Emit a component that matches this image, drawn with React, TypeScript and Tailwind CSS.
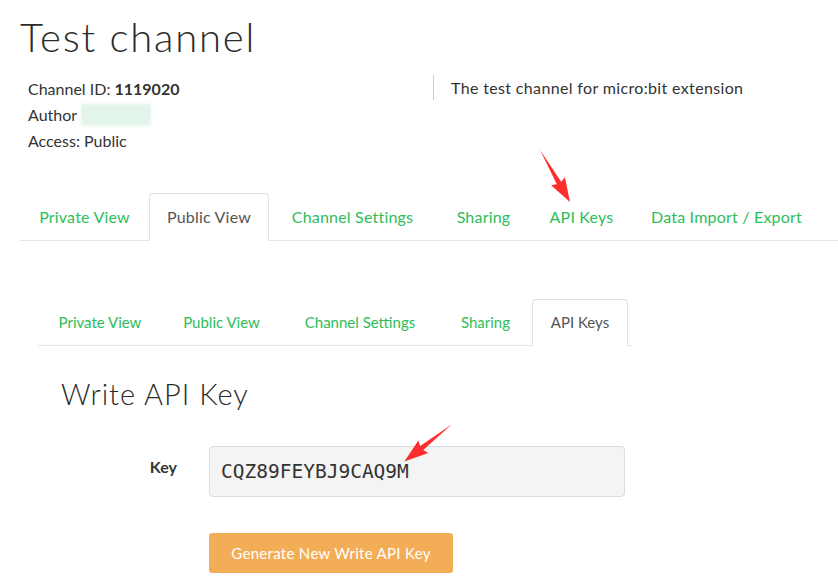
import { FC } from "react";

const sans = "font-['Lato','Liberation_Sans',sans-serif]";
const thin = "font-['Lato','Liberation_Sans',sans-serif] font-light";

const topTabs = [
  { label: "Private View", w: "w-[129px]" },
  { label: "Public View", w: "w-[120px]", active: true },
  { label: "Channel Settings", w: "w-[167px]" },
  { label: "Sharing", w: "w-[95px]" },
  { label: "API Keys", w: "w-[101px]" },
  { label: "Data Import / Export", w: "w-[189px]" },
];

const subTabs = [
  { label: "Private View", w: "w-[124px]" },
  { label: "Public View", w: "w-[119px]" },
  { label: "Channel Settings", w: "w-[158px]" },
  { label: "Sharing", w: "w-[93px]" },
  { label: "API Keys", w: "w-[96px]", active: true },
];

const Arrow: FC<{ className: string; rotate: number }> = ({ className, rotate }) => (
  <svg className={className} width="60" height="20" viewBox="0 0 60 20" style={{ transform: `rotate(${rotate}deg)` }}>
    <polygon points="0,10 38,7.5 36,2 60,10 36,18 38,12.5" fill="#ff2e2e" />
  </svg>
);

const App: FC = () => {
  return (
    <div className={`relative w-[838px] h-[584px] overflow-hidden bg-white pl-[20px] ${sans}`}>
      <h1 className={`${thin} text-[40px] leading-[44px] tracking-[1.8px] text-[#2b2b2b] pt-[15px]`}>Test channel</h1>

      <div className="flex mt-[17px] text-[16px] text-[#333]">
        <div className="w-[413px] pl-[8px] leading-[26px]">
          <p>
            Channel ID: <b className="font-bold">1119020</b>
          </p>
          <p className="flex items-center">
            Author
            <span className="ml-[4px] inline-block w-[70px] h-[22px] bg-[#e3f4ea] blur-[1px]" />
          </p>
          <p>Access: Public</p>
        </div>
        <div className="border-l border-[#ccc] h-[25px] pl-[17px] leading-[26px] tracking-[0.35px] -translate-y-[1px]">
          The test channel for micro:bit extension
        </div>
      </div>

      <ul className="flex mt-[39px] border-b border-[#e5e5e5] text-[16px] tracking-[0.2px]">
        {topTabs.map((t) => (
          <li
            key={t.label}
            className={`${t.w} h-[48px] flex items-center justify-center -mb-px ${
              t.active
                ? "border border-[#e1e1e1] border-b-white rounded-t-[4px] text-[#555] bg-white"
                : "text-[#2ebd59]"
            }`}
          >
            {t.label}
          </li>
        ))}
      </ul>

      <ul className="flex ml-[18px] w-[594px] mt-[58px] border-b border-[#e5e5e5] text-[15px]">
        {subTabs.map((t) => (
          <li
            key={t.label}
            className={`${t.w} h-[47px] flex items-center justify-center -mb-px ${
              t.active
                ? "border border-[#e1e1e1] border-b-white rounded-t-[4px] text-[#555] bg-white"
                : "text-[#2ebd59]"
            }`}
          >
            {t.label}
          </li>
        ))}
      </ul>

      <h2 className={`${thin} ml-[41px] mt-[30px] text-[29px] leading-[36px] tracking-[1px] text-[#2b2b2b]`}>Write API Key</h2>

      <div className="flex items-center mt-[34px]">
        <div className="w-[189px] pr-[32px] text-right text-[16px] font-bold text-[#333] -translate-y-[5px]">Key</div>
        <div className="w-[416px] h-[51px] flex items-center px-[11px] bg-[#f4f4f4] border border-[#dcdcdc] rounded-[4px] font-['DejaVu_Sans_Mono',monospace] text-[19.5px] text-[#333]">
          CQZ89FEYBJ9CAQ9M
        </div>
      </div>

      <button className={`mt-[36px] ml-[189px] w-[244px] h-[40px] rounded-[3px] bg-[#f4ad57] text-white text-[15px] tracking-[0.3px] ${sans}`}>
        Generate New Write API Key
      </button>

      <Arrow className="absolute left-[525px] top-[166px] origin-center" rotate={60} />
      <Arrow className="absolute left-[398px] top-[433px] origin-center" rotate={142} />
    </div>
  );
};

export default App;
